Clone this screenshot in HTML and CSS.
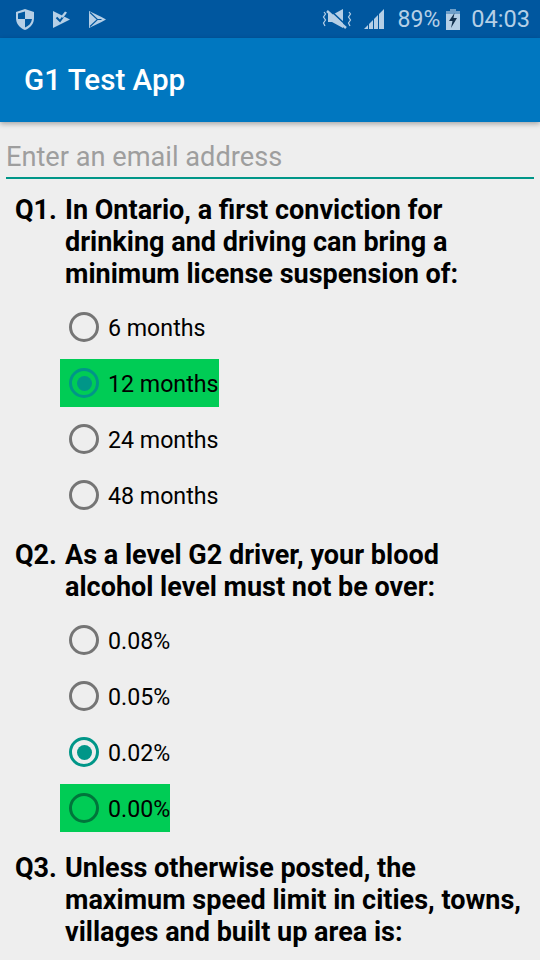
FILE: index.html
```html
<!DOCTYPE html>
<html lang="en">
<head>
  <meta charset="UTF-8">
  <meta name="viewport" content="width=device-width, initial-scale=1.0">
  <title>G1 Test App</title>
  <link rel="stylesheet" href="styles.css">
</head>
<body>
  <div class="status-bar">
    <div class="status-left">
      <svg width="18" height="21" viewBox="0 0 18 21">
        <path d="M9 0 L18 3 V9 C18 14.500 14.500 19 9 21 C3.500 19 0 14.500 0 9 V3 Z" fill="#b5cfe6"/>
        <path d="M9 2.500 V10 H2 V4.500 Z M9 10 H16 C15.500 14 13 17 9 18.500 Z" fill="#00579f"/>
      </svg>
      <svg width="17" height="17" viewBox="0 0 17 17">
        <path d="M0 0 L17 8.500 L0 17 Z" fill="#b5cfe6"/>
        <path d="M3.500 6.500 L7 10 L12.500 2.500" fill="none" stroke="#00579f" stroke-width="2"/>
        <path d="M8 5.500 L12 0.500 L14 1.500 L10 7 Z" fill="#b5cfe6"/>
      </svg>
      <svg width="17" height="17" viewBox="0 0 17 17">
        <path d="M0 0 L12.500 6 L17 8.500 L12.500 11 L0 17 Z" fill="#b5cfe6"/>
        <path d="M1 1.500 L8.500 8.500 L1 15.500 M8.500 8.500 H12.500" fill="none" stroke="#00579f" stroke-width="1.100"/>
      </svg>
    </div>
    <div class="status-right">
      <svg class="mute-icon" width="30" height="22" viewBox="0 0 30 22">
        <path d="M6 5 L10 7 L21 1 V20 L10 14 L6 14 Z" fill="#b5cfe6"/>
        <path d="M8 2 L24 17" stroke="#00579f" stroke-width="1.600"/>
        <path d="M5 3 L24 20" stroke="#b5cfe6" stroke-width="2.400"/>
        <path d="M2 4 L3.500 6 L1.500 9 L3.500 12 L1.500 15 L3 18 M27 4 L28.500 6 L26.500 9 L28.500 12 L26.500 15 L28 18" fill="none" stroke="#b5cfe6" stroke-width="1.200"/>
      </svg>
      <svg class="signal-icon" width="22" height="22" viewBox="0 0 22 22">
        <path d="M0 21 H4 V17 Z M5 21 H9 V12 L5 16 Z M10 21 H14 V7 L10 11 Z M15 21 H20 V1 L15 6 Z" fill="#b5cfe6"/>
      </svg>
      <span class="status-text">89%</span>
      <svg class="battery-icon" width="14" height="21" viewBox="0 0 14 21">
        <path d="M4 0 H10 V2 H14 V5 H0 V2 H4 Z" fill="#6f9fc9"/>
        <path d="M0 5 H14 V21 H0 Z" fill="#b5cfe6"/>
        <path d="M8.500 4 L3 12 H6.500 L5 19 L11 9 H7.500 Z" fill="#12304d"/>
      </svg>
      <span class="status-text clock">04:03</span>
    </div>
  </div>
  <header class="app-bar">G1 Test App</header>

  <main class="content">
    <div class="email-field">Enter an email address</div>

    <section class="question">
      <div class="q-title"><span class="q-num">Q1.</span><span>In Ontario, a first conviction for drinking and driving can bring a minimum license suspension of:</span></div>
      <div class="options">
        <div class="option"><span class="radio"></span>6 months</div>
        <div class="option correct"><span class="radio checked"></span>12 months</div>
        <div class="option"><span class="radio"></span>24 months</div>
        <div class="option"><span class="radio"></span>48 months</div>
      </div>
    </section>

    <section class="question">
      <div class="q-title"><span class="q-num">Q2.</span><span>As a level G2 driver, your blood alcohol level must not be over:</span></div>
      <div class="options">
        <div class="option"><span class="radio"></span>0.08%</div>
        <div class="option"><span class="radio"></span>0.05%</div>
        <div class="option"><span class="radio checked"></span>0.02%</div>
        <div class="option correct"><span class="radio"></span>0.00%</div>
      </div>
    </section>

    <section class="question">
      <div class="q-title"><span class="q-num">Q3.</span><span>Unless otherwise posted, the maximum speed limit in cities, towns, villages and built up area is:</span></div>
    </section>
  </main>
</body>
</html>
```

FILE: styles.css
```css
html, body {
  margin: 0;
  height: 100%;
  overflow: hidden;
}
body {
  background-color: #eeeeee;
  font-family: Roboto, sans-serif;
  color: #000;
}
.status-bar {
  height: 38px;
  background-color: #00579f;
  display: flex;
  justify-content: space-between;
  align-items: center;
  padding: 0 10px 0 16px;
}
.status-left {
  display: flex;
  align-items: center;
  gap: 19px;
}
.status-right {
  display: flex;
  align-items: center;
}
.status-text {
  color: #b5cfe6;
  font-size: 23px;
  margin-left: 12px;
}
.signal-icon {
  margin-left: 12px;
}
.battery-icon {
  margin-left: 6px;
}
.status-text.clock {
  font-size: 23.6px;
  margin-left: 11px;
}
.app-bar {
  height: 84px;
  background-color: #0077c0;
  color: #fff;
  font-size: 29.6px;
  font-weight: 500;
  display: flex;
  align-items: center;
  padding-left: 24px;
  box-shadow: 0 2px 5px rgba(0, 0, 0, 0.3);
}
.content {
  padding: 16px 6px 0;
}
.email-field {
  height: 39px;
  line-height: 38px;
  font-size: 27.2px;
  color: #9e9e9e;
  border-bottom: 2px solid #009688;
}
.question {
  margin-top: 15px;
  padding: 0 8px 0 9px;
}
.q-title {
  display: flex;
  font-size: 27px;
  font-weight: 700;
  line-height: 32px;
}
.q-num {
  flex: 0 0 50px;
}
.options {
  margin-top: 13px;
  padding-left: 45px;
  margin-bottom: 20px;
}
.option {
  box-sizing: border-box;
  display: flex;
  align-items: center;
  width: fit-content;
  height: 48px;
  padding-top: 2px;
  margin-bottom: 8px;
  font-size: 23.2px;
}
.option:last-child {
  margin-bottom: 0;
}
.option.correct {
  background-color: #00cc55;
}
.radio {
  box-sizing: border-box;
  width: 30px;
  height: 30px;
  border: 3px solid #757575;
  border-radius: 50%;
  margin: -2px 9px 0;
  position: relative;
}
.correct .radio {
  border-color: #00753b;
}
.radio.checked,
.correct .radio.checked {
  border-color: #009688;
}
.radio.checked::after {
  content: "";
  position: absolute;
  top: 4.5px;
  left: 4.5px;
  width: 15px;
  height: 15px;
  border-radius: 50%;
  background-color: #009688;
}
```
